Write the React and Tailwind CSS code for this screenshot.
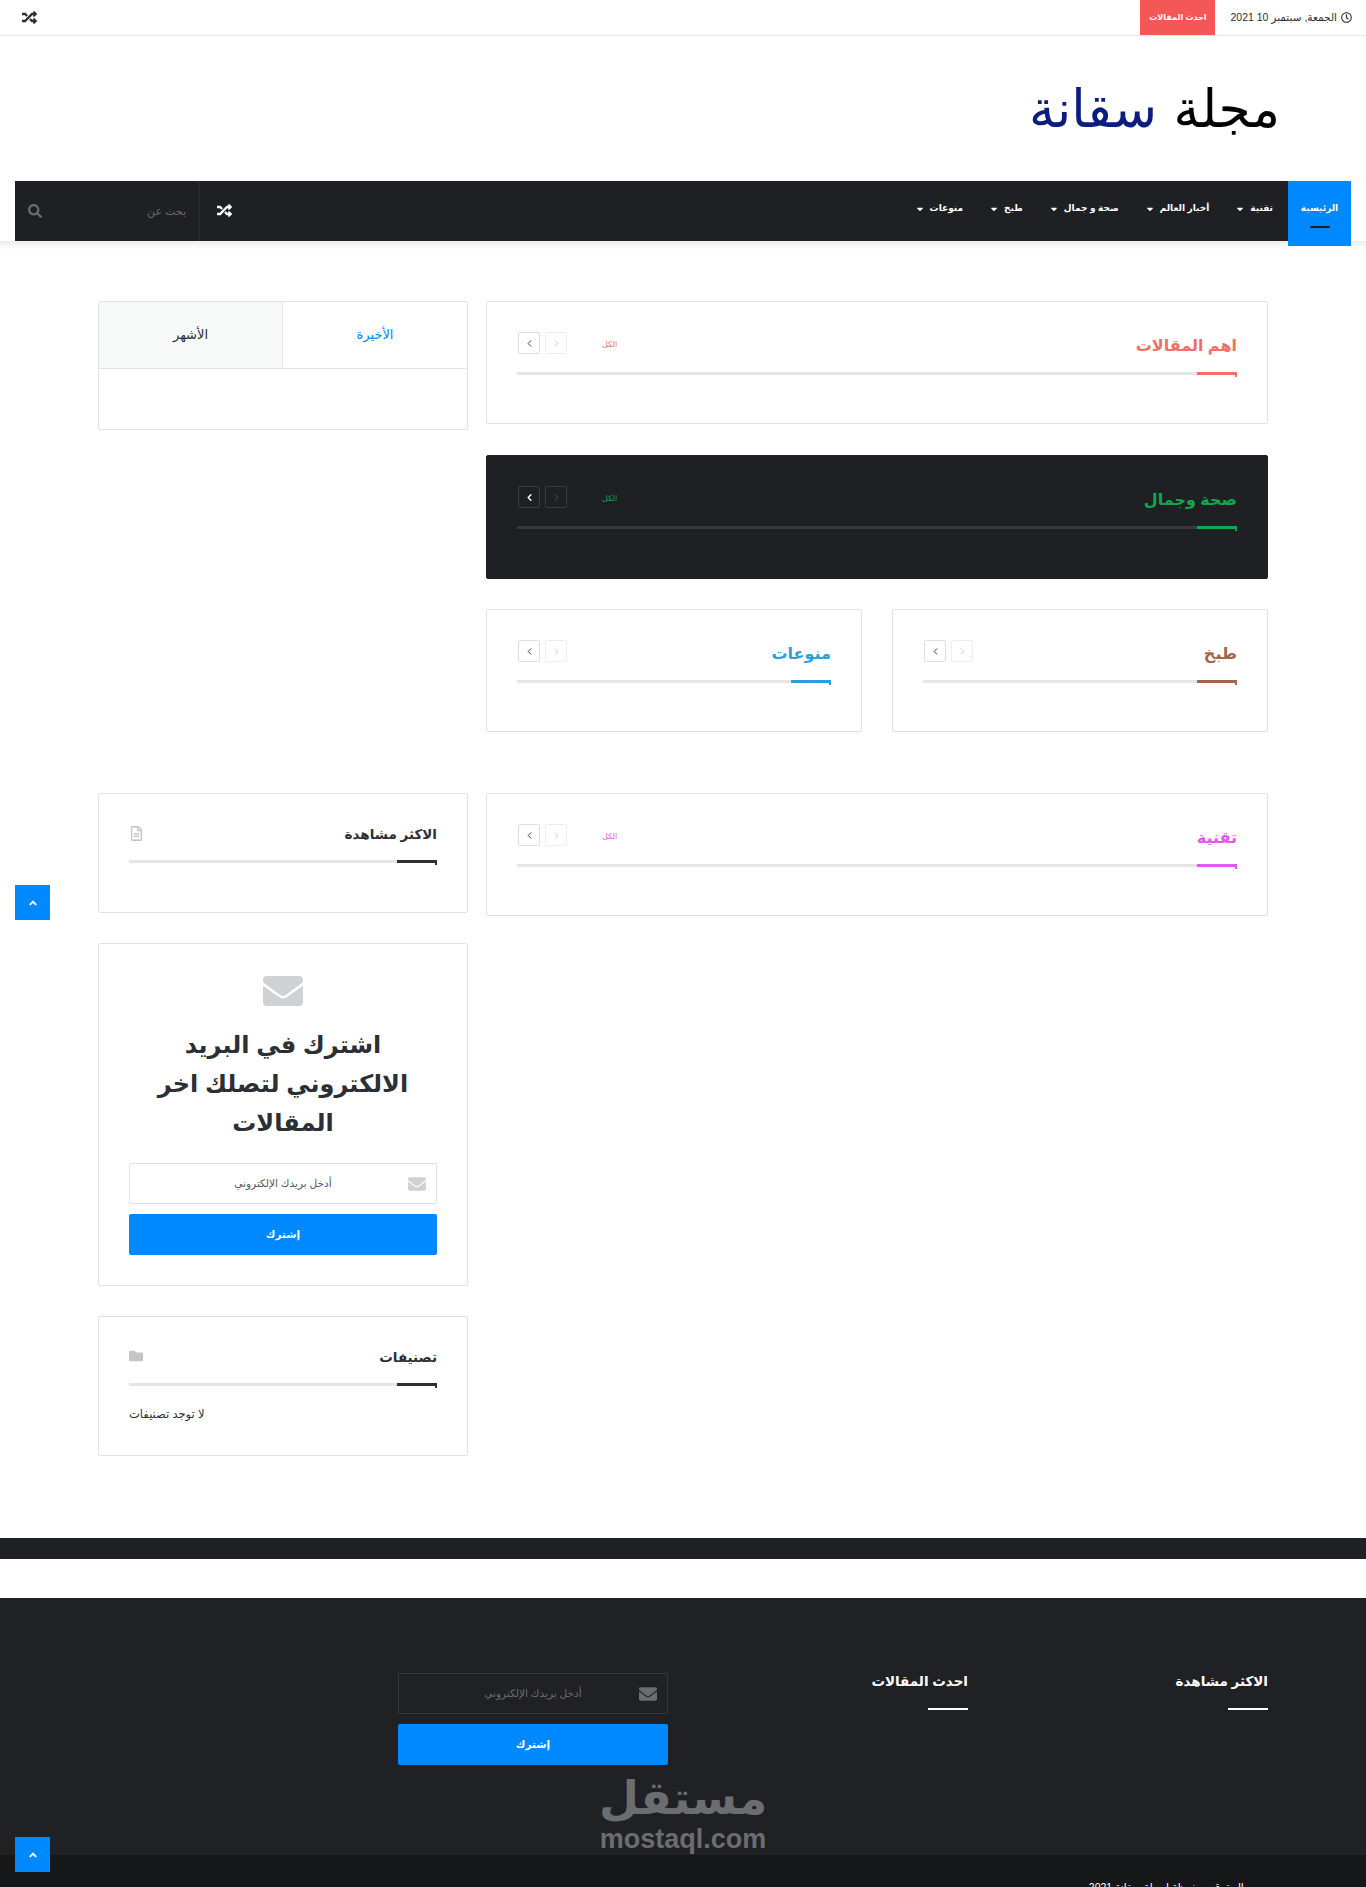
import { FaRandom, FaSearch, FaEnvelope, FaFolder, FaRegFileAlt, FaRegClock, FaAngleUp, FaCaretDown } from "react-icons/fa";
import { ChevronLeft, ChevronRight } from "lucide-react";

const BODY = "font-['Liberation_Sans','DejaVu_Sans',sans-serif]";

const navItems = ["تقنية", "أخبار العالم", "صحة و جمال", "طبخ", "منوعات"];

function PagerButtons({ dark }) {
  return (
    <div className="flex flex-row-reverse gap-[5px] pl-[1px]" dir="ltr">
      <span className={`flex h-[22px] w-[22px] items-center justify-center rounded-[2px] border ${dark ? "border-[#3a3b3f] text-[#55565a]" : "border-[#eeeeee] text-[#c9c9cc]"}`}>
        <ChevronRight size={11} strokeWidth={2} />
      </span>
      <span className={`flex h-[22px] w-[22px] items-center justify-center rounded-[2px] border ${dark ? "border-[#3a3b3f] text-white" : "border-[#dddddd] text-[#2c2f34]"}`}>
        <ChevronLeft size={11} strokeWidth={dark ? 3 : 2} />
      </span>
    </div>
  );
}

function BlockHead({ title, titleClass, barClass, showAll, allClass, dark }) {
  return (
    <div className="relative">
      <div className={`flex h-[43px] items-start border-b-[3px] ${dark ? "border-[#37383c]" : "border-[#e5e5e5]"}`}>
        <h2 className={`mt-[2px] text-[16px] font-bold leading-[24px] ${titleClass}`}>{title}</h2>
        <div className="mr-auto flex items-start">
          {showAll && <span className={`ml-[35px] mt-[7px] text-[8px] leading-[12px] ${allClass}`}>الكل</span>}
          <PagerButtons dark={dark} />
        </div>
      </div>
      <span className={`absolute bottom-0 right-0 h-[3px] w-[40px] ${barClass}`} />
      <span className={`absolute bottom-[-2px] right-0 h-[2px] w-[2px] ${barClass}`} />
    </div>
  );
}

function MainCard({ dark, className = "", ...head }) {
  return (
    <section className={`rounded-[2px] border px-[30px] pt-[30px] ${dark ? "h-[124px] border-[#1f2024] bg-[#1f2024]" : "h-[123px] border-[#e3e3e3] bg-white"} ${className}`}>
      <BlockHead dark={dark} {...head} />
    </section>
  );
}

function WidgetHead({ title, Icon, iconClass }) {
  return (
    <div className="relative flex h-[39px] items-start border-b-[3px] border-[#e5e5e5]">
      <h3 className="text-[13.5px] font-bold leading-[22px] text-[#2c2f34]">{title}</h3>
      <span className={`mr-auto mt-[2px] ${iconClass}`}>
        <Icon />
      </span>
      <span className="absolute bottom-[-3px] right-0 h-[3px] w-[40px] bg-[#2c2f34]" />
      <span className="absolute bottom-[-5px] right-0 h-[2px] w-[2px] bg-[#2c2f34]" />
    </div>
  );
}

function FooterTitle({ children }) {
  return (
    <div>
      <h3 className="text-[13.5px] font-bold leading-[24px] text-white">{children}</h3>
      <div className="mt-[14px] h-[2px] w-[40px] bg-white" />
    </div>
  );
}

function EmailField({ dark }) {
  return (
    <div className={`flex h-[41px] items-center rounded-[2px] border pr-[10px] pl-[8px] ${dark ? "border-[#37383c]" : "border-[#e3e3e3] bg-white"}`}>
      <FaEnvelope className={`text-[18px] ${dark ? "text-[#6b6c70]" : "text-[#d0d1d4]"}`} />
      <span className={`flex-1 pl-[20px] text-center text-[10.5px] ${dark ? "text-[#6b6c70]" : "text-[#55565a]"}`}>أدخل بريدك الإلكتروني</span>
    </div>
  );
}

function SubscribeButton() {
  return (
    <button type="button" className="flex h-[41px] w-full items-center justify-center rounded-[2px] bg-[#0088ff] text-[10.5px] font-bold text-white">
      إشترك
    </button>
  );
}

function ScrollTop({ className }) {
  return (
    <span className={`absolute left-[15px] flex h-[35px] w-[35px] items-center justify-center bg-[#0088ff] text-[12px] text-white ${className}`}>
      <FaAngleUp />
    </span>
  );
}

export default function App() {
  return (
    <div dir="rtl" className={`relative h-[1887px] overflow-hidden bg-white text-[#2c2f34] ${BODY}`}>
      {/* top bar */}
      <div className="flex h-[36px] items-stretch border-b border-[#e5e5e5] pr-[14px] pl-[22px]">
        <div className="flex items-center gap-[4px] text-[10.5px] text-[#2c2f34]">
          <FaRegClock className="text-[11px]" />
          <span>الجمعة, سبتمبر 10 2021</span>
        </div>
        <div className="mr-[15px] flex w-[75px] items-center justify-center bg-[#f55656] text-[8px] font-bold text-white">احدث المقالات</div>
        <FaRandom className="mr-auto self-center text-[15px] text-[#2c2f34]" />
      </div>

      {/* logo */}
      <div className="flex h-[145px] items-center pr-[86px]">
        <div className="font-['DejaVu_Sans',sans-serif] text-[52px] leading-none text-black">
          مجلة <span className="text-[#0a1e7d]">سقانة</span>
        </div>
      </div>

      {/* nav */}
      <div className="relative">
        <div className="absolute inset-x-0 top-[60px] h-[9px] bg-gradient-to-b from-[#ededed] to-white" />
        <nav className="relative mx-[15px] flex h-[60px] bg-[#1f2024] text-white">
          <div className="relative flex h-[65px] w-[63px] items-start justify-center bg-[#0088ff] pt-[21px] text-[9px] font-bold">
            الرئيسية
            <span className="absolute bottom-[18px] left-1/2 h-[2px] w-[20px] -translate-x-1/2 bg-[#1f2024]" />
          </div>
          <div className="flex items-start gap-[26px] pt-[21px] pr-[15px] text-[9px] font-bold">
            {navItems.map((item) => (
              <span key={item} className="flex items-center gap-[5px]">
                {item}
                <FaCaretDown className="text-[10px]" />
              </span>
            ))}
          </div>
          <div className="mr-auto flex items-center">
            <FaRandom className="mb-[2px] ml-[17px] text-[15px]" />
            <div className="flex h-full w-[185px] items-center justify-between border-r border-[#2c2d31] pr-[13px] pl-[13px] text-[11px] text-[#6b6c70]">
              <span>بحث عن</span>
              <FaSearch className="text-[14px]" />
            </div>
          </div>
        </nav>
      </div>

      {/* content */}
      <div className="mx-auto mt-[60px] flex w-[1170px] gap-[18px]">
        <main className="w-[782px]">
          <div className="flex flex-col gap-[30px]">
            <MainCard className="mb-[1px]" title="اهم المقالات" titleClass="text-[#f46e68]" barClass="bg-[#f46e68]" showAll allClass="text-[#f46e68]" />
            <MainCard dark title="صحة وجمال" titleClass="text-[#0ea84f]" barClass="bg-[#0ea84f]" showAll allClass="text-[#0ea84f]" />
            <div className="grid grid-cols-2 gap-[30px]">
              <MainCard title="طبخ" titleClass="text-[#a0674b]" barClass="bg-[#a0674b]" />
              <MainCard title="منوعات" titleClass="text-[#2a9fd8]" barClass="bg-[#2a9fd8]" />
            </div>
          </div>
          <MainCard className="mt-[61px]" title="تقنية" titleClass="text-[#e457f0]" barClass="bg-[#e457f0]" showAll allClass="text-[#e457f0]" />
        </main>

        <aside className="w-[370px]">
          <div className="h-[129px] rounded-[2px] border border-[#e3e3e3]">
            <div className="grid h-[67px] grid-cols-2 border-b border-[#e3e3e3] text-[13px]">
              <div className="flex items-center justify-center text-[#0088ff]">الأخيرة</div>
              <div className="flex items-center justify-center border-r border-[#e3e3e3] bg-[#f7f8f8]">الأشهر</div>
            </div>
          </div>

          <div className="mt-[363px] h-[120px] rounded-[2px] border border-[#e3e3e3] px-[30px] pt-[30px]">
            <WidgetHead title="الاكثر مشاهدة" Icon={FaRegFileAlt} iconClass="text-[15px] text-[#c4c5c8]" />
          </div>

          <div className="mt-[30px] h-[343px] rounded-[2px] border border-[#e3e3e3] px-[30px] pt-[27px] text-center">
            <FaEnvelope className="mx-auto text-[40px] text-[#d0d1d4]" />
            <div className="mt-[14px] text-[24px] font-bold leading-[39px] text-[#2c2f34]">
              اشترك في البريد الالكتروني لتصلك اخر المقالات
            </div>
            <div className="mt-[21px] flex flex-col gap-[10px]">
              <EmailField />
              <SubscribeButton />
            </div>
          </div>

          <div className="mt-[30px] h-[140px] rounded-[2px] border border-[#e3e3e3] px-[30px] pt-[30px]">
            <WidgetHead title="تصنيفات" Icon={FaFolder} iconClass="text-[14px] text-[#c4c5c8]" />
            <div className="mt-[20px] text-left text-[11.5px] text-[#2c2f34]">لا توجد تصنيفات</div>
          </div>
        </aside>
      </div>

      {/* dark strip */}
      <div className="absolute inset-x-0 top-[1538px] h-[21px] bg-[#1f2024]" />

      {/* footer */}
      <footer className="absolute inset-x-0 top-[1598px] bottom-0 bg-[#1f2125]">
        <div className="mx-auto grid w-[1170px] grid-cols-4 gap-[30px] pt-[72px]">
          <FooterTitle>الاكثر مشاهدة</FooterTitle>
          <FooterTitle>احدث المقالات</FooterTitle>
          <div className="mt-[3px] flex flex-col gap-[10px]">
            <EmailField dark />
            <SubscribeButton />
          </div>
        </div>
        <div className="absolute inset-x-0 bottom-0 h-[32px] bg-[#161719]">
          <div className="mx-auto flex w-[1170px] items-start justify-between pt-[25px] text-[10.5px] text-white">
            <span>جميع الحقوق محفوظة لمجلة سقانة 2021</span>
            <span className="mt-[5px] ml-[52px]">الرئيسية من نحن اتصل بنا</span>
          </div>
        </div>
      </footer>

      {/* watermark */}
      <div className="absolute left-[598px] top-[1770px] w-[170px] text-center font-['DejaVu_Sans',sans-serif] font-bold text-[#6c6d71]">
        <div className="text-[46px] leading-[56px]">مستقل</div>
        <div dir="ltr" className="font-['Liberation_Sans',sans-serif] text-[27px] font-bold leading-[26px]">mostaql.com</div>
      </div>

      <ScrollTop className="top-[885px]" />
      <ScrollTop className="top-[1837px]" />
    </div>
  );
}
